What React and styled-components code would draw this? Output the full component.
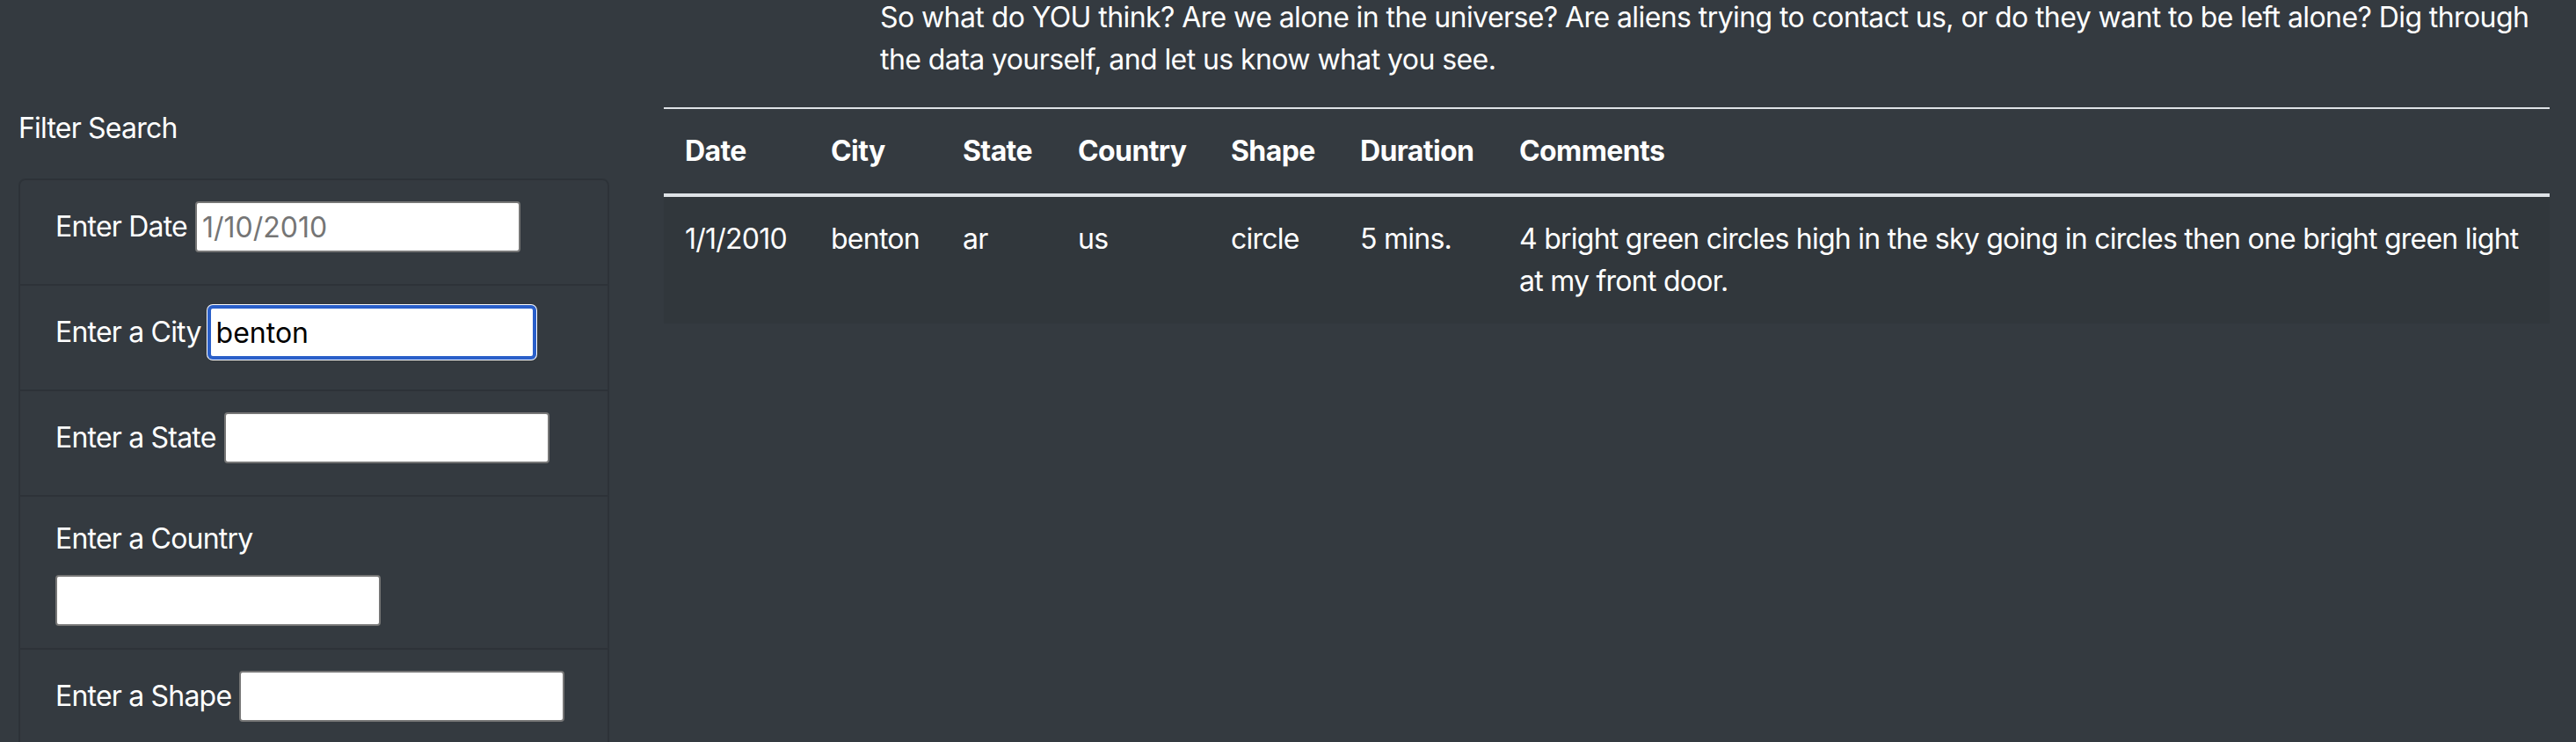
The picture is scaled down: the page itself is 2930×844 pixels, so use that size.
import React from 'react';
import styled, { createGlobalStyle } from 'styled-components';

const GlobalStyle = createGlobalStyle`
  html, body {
    margin: 0;
    padding: 0;
    background: #343a40;
    overflow: hidden;
  }
  body {
    font-family: Inter, "Noto Sans", sans-serif;
    font-size: 32px;
    line-height: 48px;
    color: #fff;
  }
`;

const columns = [
    { key: 'datetime', label: 'Date', width: 166 },
    { key: 'city', label: 'City', width: 150 },
    { key: 'state', label: 'State', width: 131 },
    { key: 'country', label: 'Country', width: 174 },
    { key: 'shape', label: 'Shape', width: 147 },
    { key: 'duration', label: 'Duration', width: 181 },
    { key: 'comments', label: 'Comments' },
];

const sightings = [
    {
        datetime: '1/1/2010',
        city: 'benton',
        state: 'ar',
        country: 'us',
        shape: 'circle',
        duration: '5 mins.',
        comments: '4 bright green circles high in the sky going in circles then one bright green light at my front door.',
    },
];

const filters = [
    { id: 'datetime', label: 'Enter Date', placeholder: '1/10/2010' },
    { id: 'city', label: 'Enter a City', value: 'benton', focused: true },
    { id: 'state', label: 'Enter a State' },
    { id: 'country', label: 'Enter a Country', stacked: true },
    { id: 'shape', label: 'Enter a Shape' },
];

const App = () => {
    return (
        <Page>
            <GlobalStyle />
            <Intro>
                So what do YOU think? Are we alone in the universe? Are aliens trying to contact us, or do they want to be
                left alone? Dig through the data yourself, and let us know what you see.
            </Intro>
            <Main>
                <Sidebar>
                    <Heading>Filter Search</Heading>
                    <FilterCard>
                        {filters.map((f) => (
                            <FilterRow key={f.id} $stacked={f.stacked}>
                                <Label htmlFor={f.id} $stacked={f.stacked}>{f.label}</Label>
                                <Input
                                    id={f.id}
                                    type="text"
                                    placeholder={f.placeholder}
                                    defaultValue={f.value}
                                    $focused={f.focused}
                                />
                            </FilterRow>
                        ))}
                    </FilterCard>
                </Sidebar>
                <Table>
                    <colgroup>
                        {columns.map((c) => (
                            <Col key={c.key} $w={c.width} />
                        ))}
                    </colgroup>
                    <thead>
                        <tr>
                            {columns.map((c) => (
                                <Th key={c.key}>{c.label}</Th>
                            ))}
                        </tr>
                    </thead>
                    <tbody>
                        {sightings.map((s, i) => (
                            <Tr key={i} $striped={i % 2 === 0}>
                                {columns.map((c) => (
                                    <Td key={c.key}>{s[c.key]}</Td>
                                ))}
                            </Tr>
                        ))}
                    </tbody>
                </Table>
            </Main>
        </Page>
    );
};

const Page = styled.div`
  padding: 0 30px 0 21px;
`;

const Intro = styled.p`
  margin: -4px 0 0 980px;
  letter-spacing: -0.58px;
`;

const Main = styled.div`
  display: grid;
  grid-template-columns: 672px 1fr;
  column-gap: 62px;
  margin-top: 30px;
  align-items: start;
`;

const Sidebar = styled.div`
  display: flex;
  flex-direction: column;
`;

const Heading = styled.div`
  margin-bottom: 33px;
  letter-spacing: -0.8px;
`;

const FilterCard = styled.div`
  display: flex;
  flex-direction: column;
  border: 2px solid rgba(0, 0, 0, 0.125);
  border-radius: 8px;
`;

const FilterRow = styled.div`
  display: flex;
  flex-wrap: ${(p) => (p.$stacked ? 'wrap' : 'nowrap')};
  align-items: flex-start;
  column-gap: 9px;
  min-height: ${(p) => (p.$stacked ? '124px' : '70px')};
  padding: 24px 40px;
  border-bottom: 2px solid rgba(0, 0, 0, 0.125);
`;

const Label = styled.label`
  flex-shrink: 0;
  letter-spacing: -0.8px;
  margin-top: ${(p) => (p.$stacked ? '0' : '5px')};
  ${(p) => p.$stacked && 'width: 100%; margin-bottom: 16px;'}
`;

const Input = styled.input`
  box-sizing: border-box;
  flex-shrink: 0;
  width: 370px;
  height: 58px;
  padding: 0 6px;
  font: inherit;
  color: #000;
  background: #fff;
  border: 2px solid ${(p) => (p.$focused ? '#2a5fc9' : '#767676')};
  border-radius: 4px;
  outline: none;
  box-shadow: ${(p) => (p.$focused ? '0 0 0 2px #2a5fc9, 0 0 0 3px #fff' : 'none')};

  &::placeholder {
    color: #757575;
  }
`;

const Table = styled.table`
  width: 100%;
  table-layout: fixed;
  border-collapse: collapse;
`;

const Col = styled.col`
  width: ${(p) => (p.$w ? `${p.$w}px` : 'auto')};
`;

const Th = styled.th`
  padding: 24px;
  text-align: left;
  font-weight: 700;
  letter-spacing: -0.6px;
  vertical-align: bottom;
  border-top: 2px solid #dee2e6;
  border-bottom: 4px solid #dee2e6;
`;

const Tr = styled.tr`
  background: ${(p) => (p.$striped ? 'rgba(0, 0, 0, 0.05)' : 'transparent')};
`;

const Td = styled.td`
  padding: 24px;
  vertical-align: top;
  letter-spacing: -0.75px;
`;

export default App;
